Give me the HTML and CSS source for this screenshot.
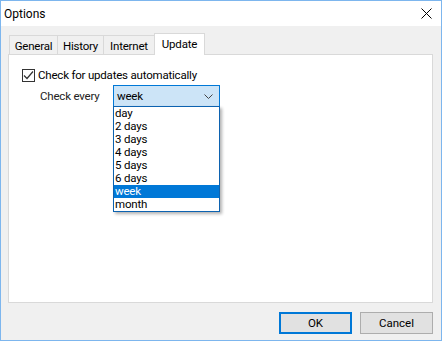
FILE: index.html
```html
<!DOCTYPE html>
<html lang="en">
<head>
  <meta charset="UTF-8">
  <title>Options</title>
  <link rel="stylesheet" href="styles.css">
</head>
<body>
  <div class="window">
    <div class="titlebar">
      <span class="title">Options</span>
      <svg class="close" width="11" height="11" viewBox="0 0 11 11">
        <path d="M0.5 0.5 L10.5 10.5 M10.5 0.5 L0.5 10.5" stroke="#000" stroke-width="1"/>
      </svg>
    </div>

    <div class="content">
      <div class="tabs">
        <div class="tab tab-general">General</div>
        <div class="tab tab-history">History</div>
        <div class="tab tab-internet">Internet</div>
        <div class="tab tab-update selected">Update</div>
      </div>

      <div class="panel">
        <label class="check-row">
          <span class="checkbox">
            <svg width="11" height="11" viewBox="0 0 11 11">
              <path d="M1 5.5 L4 8.5 L10 1.5" fill="none" stroke="#333" stroke-width="1.2"/>
            </svg>
          </span>
          Check for updates automatically
        </label>

        <div class="every-row">
          <span class="every-label">Check every</span>
          <div class="combo">
            <span>week</span>
            <svg class="chevron" width="9" height="5" viewBox="0 0 9 5">
              <path d="M0.5 0.5 L4.5 4.5 L8.5 0.5" fill="none" stroke="#444" stroke-width="1"/>
            </svg>
            <ul class="dropdown">
              <li>day</li>
              <li>2 days</li>
              <li>3 days</li>
              <li>4 days</li>
              <li>5 days</li>
              <li>6 days</li>
              <li class="active">week</li>
              <li>month</li>
            </ul>
          </div>
        </div>
      </div>

      <div class="buttons">
        <button class="btn default">OK</button>
        <button class="btn">Cancel</button>
      </div>
    </div>
  </div>
</body>
</html>
```

FILE: styles.css
```css
* {
  box-sizing: border-box;
  margin: 0;
  padding: 0;
}

body {
  font-family: Roboto, "Liberation Sans", sans-serif;
  font-size: 11.5px;
  letter-spacing: -0.2px;
  color: #000;
  background: #fff;
}

/* Finestra principale */
.window {
  width: 442px;
  height: 341px;
  border: 1px solid #7db6ee;
  display: flex;
  flex-direction: column;
  background: #f0f0f0;
}

.titlebar {
  height: 25px;
  background: #fff;
  display: flex;
  align-items: center;
  justify-content: space-between;
  padding: 0 9px 0 3px;
}

.title {
  font-size: 12px;
  letter-spacing: 0;
}

.content {
  flex: 1;
  display: flex;
  flex-direction: column;
  padding: 7px 8px 0 7px;
}

/* Schede */
.tabs {
  display: flex;
  align-items: flex-end;
  height: 21px;
  padding-left: 1px;
  position: relative;
  z-index: 1;
}

.tab {
  height: 19px;
  border: 1px solid #d9d9d9;
  border-right: none;
  border-bottom: none;
  background: #f0f0f0;
  display: flex;
  align-items: center;
  justify-content: center;
  padding-top: 1px;
}

.tab-general { width: 48px; }
.tab-history { width: 46px; }
.tab-internet { width: 51px; }

.tab.selected {
  width: 51px;
  height: 22px;
  background: #fff;
  border-right: 1px solid #d9d9d9;
  margin-bottom: -1px;
  padding-bottom: 3px;
}

.panel {
  height: 249px;
  background: #fff;
  border: 1px solid #d9d9d9;
  position: relative;
  padding: 13px 0 0 13px;
}

.check-row {
  display: flex;
  align-items: center;
  gap: 3px;
  height: 14px;
}

.checkbox {
  width: 13px;
  height: 13px;
  border: 1px solid #333;
  display: flex;
  align-items: center;
  justify-content: center;
}

.every-row {
  display: flex;
  align-items: center;
  margin-top: 3px;
  padding-left: 18px;
}

.every-label {
  width: 73px;
  color: #222;
}

.combo {
  position: relative;
  width: 107px;
  height: 22px;
  background: #cce4f7;
  border: 1px solid #0078d7;
  display: flex;
  align-items: center;
  justify-content: space-between;
  padding: 0 6px 0 3px;
}

/* Elenco a discesa aperto */
.dropdown {
  position: absolute;
  top: 20px;
  left: -1px;
  width: 107px;
  list-style: none;
  background: #fff;
  border: 1px solid #0c62b0;
  box-shadow: 2px 2px 3px rgba(0, 0, 0, 0.3);
  z-index: 2;
}

.dropdown li {
  height: 13px;
  line-height: 13px;
  padding-left: 1px;
}

.dropdown li.active {
  background: #0078d7;
  color: #fff;
}

/* Pulsanti */
.buttons {
  display: flex;
  justify-content: flex-end;
  gap: 8px;
  padding-top: 9px;
}

.btn {
  width: 73px;
  height: 22px;
  font-family: inherit;
  font-size: 11.5px;
  background: #e1e1e1;
  border: 1px solid #adadad;
  color: #000;
}

.btn.default {
  border: 2px solid #0078d7;
}
```
